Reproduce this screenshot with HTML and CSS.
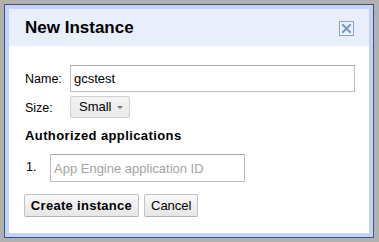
FILE: index.html
```html
<!DOCTYPE html>
<html>
<head>
<meta charset="utf-8">
<link rel="stylesheet" href="styles.css">
</head>
<body>
<div class="dialog">
  <div class="dialog-title">
    <span class="title-text">New Instance</span>
    <span class="close" aria-label="Close">
      <svg width="15" height="15" viewBox="0 0 15 15">
        <rect x="0.5" y="0.5" width="14" height="14" fill="#eef2fb" stroke="#87a4cf"/>
        <path d="M4 4 L11 11 M11 4 L4 11" stroke="#7d9bc7" stroke-width="2.2" stroke-linecap="square"/>
      </svg>
    </span>
  </div>
  <div class="dialog-body">
    <div class="form-grid">
      <label class="label">Name:</label>
      <div class="field"><input class="text-input name-input" type="text" value="gcstest"></div>
      <label class="label">Size:</label>
      <div class="field">
        <button class="btn select-btn" type="button">Small <span class="caret"></span></button>
      </div>
    </div>
    <div class="section-title">Authorized applications</div>
    <div class="app-row">
      <span class="num">1.</span>
      <input class="text-input app-input" type="text" placeholder="App Engine application ID">
    </div>
    <div class="actions">
      <button class="btn primary" type="button">Create instance</button>
      <button class="btn" type="button">Cancel</button>
    </div>
  </div>
</div>
</body>
</html>
```
FILE: styles.css
```css
html, body {
  height: 100%;
}
body {
  margin: 0;
  padding: 4px 5px 4px 4px;
  box-sizing: border-box;
  background: #b1b1b1;
  font-family: "Liberation Sans", Arial, sans-serif;
  font-size: 13px;
  color: #000;
}
.dialog {
  border: 1px solid #3a5774;
  background: #c2d2fa;
  padding: 4px;
  height: 234px;
  box-sizing: border-box;
  display: flex;
  flex-direction: column;
}
.dialog-title {
  background: #e8eefa;
  height: 37px;
  box-sizing: border-box;
  padding: 9px 15px 8px 16px;
  display: flex;
  align-items: center;
  justify-content: space-between;
}
.title-text {
  font-size: 17px;
  font-weight: bold;
  line-height: 20px;
}
.close {
  display: flex;
  width: 15px;
  height: 15px;
  margin-top: 1px;
}
.dialog-body {
  flex: 1;
  background: #fff;
  padding: 19px 14px 16px 16px;
}
.form-grid {
  display: grid;
  grid-template-columns: 45px 1fr;
  grid-template-rows: 27px 22px;
  row-gap: 4px;
  align-items: center;
}
.label {
  font-size: 12.5px;
  line-height: 16px;
  padding-top: 1px;
}
.field {
  display: flex;
  height: 100%;
}
.text-input {
  box-sizing: border-box;
  border: 1px solid #bdbdbd;
  border-top-color: #a9a9a9;
  font-family: "Liberation Sans", Arial, sans-serif;
  font-size: 13px;
  padding: 0 3px;
  margin: 0;
  outline: none;
  color: #000;
  background: #fff;
}
.name-input {
  width: 100%;
  height: 27px;
}
.app-input {
  width: 195px;
  height: 28px;
}
.app-input::placeholder {
  color: #a3a3a3;
}
.btn {
  box-sizing: border-box;
  height: 23px;
  margin: 0;
  padding: 0 6px;
  border: 1px solid #c3c3c3;
  border-bottom-color: #b3b3b3;
  border-radius: 2px;
  background: linear-gradient(#f8f8f8, #e6e6e6);
  font-family: "Liberation Sans", Arial, sans-serif;
  font-size: 13px;
  color: #000;
  line-height: 20px;
  white-space: nowrap;
}
.select-btn {
  height: 22px;
  width: 60px;
  padding: 0 0 0 8px;
  display: inline-flex;
  align-items: center;
  gap: 5px;
  border-color: #cfcfcf;
  background: linear-gradient(#f4f4f4, #e9e9e9);
}
.caret {
  width: 0;
  height: 0;
  border-left: 3px solid transparent;
  border-right: 3px solid transparent;
  border-top: 3px solid #777;
  margin-top: 1px;
}
.section-title {
  margin-top: 10px;
  font-weight: bold;
  font-size: 13px;
  letter-spacing: 0.4px;
  line-height: 16px;
}
.app-row {
  margin-top: 10px;
  display: flex;
  align-items: flex-start;
}
.num {
  width: 25px;
  flex: none;
  line-height: 16px;
  padding-top: 5px;
  font-size: 12.5px;
  padding-left: 1px;
  box-sizing: border-box;
}
.actions {
  margin-top: 12px;
  margin-left: -1px;
  display: flex;
  gap: 5px;
}
.primary {
  font-weight: bold;
  letter-spacing: 0.3px;
  padding: 0 5px;
  width: 115px;
}
```
